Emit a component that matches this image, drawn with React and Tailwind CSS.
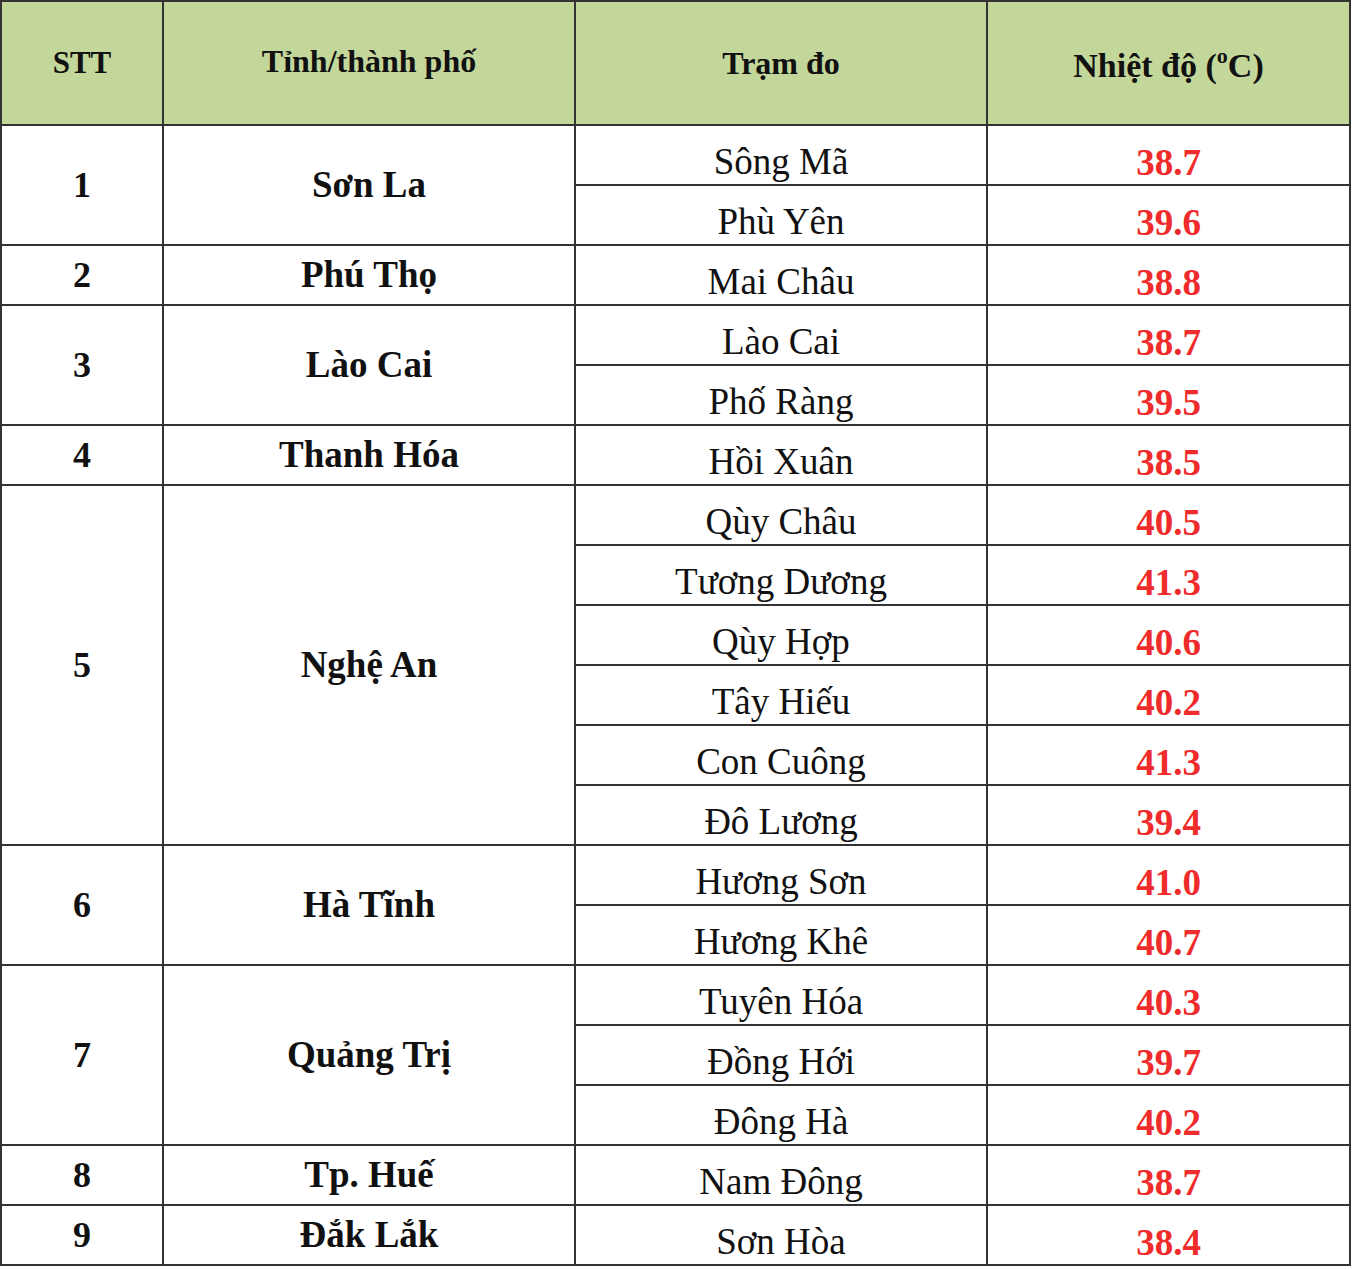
import React from "react";

const data = [
  { stt: 1, province: "Sơn La", stations: [["Sông Mã", "38.7"], ["Phù Yên", "39.6"]] },
  { stt: 2, province: "Phú Thọ", stations: [["Mai Châu", "38.8"]] },
  { stt: 3, province: "Lào Cai", stations: [["Lào Cai", "38.7"], ["Phố Ràng", "39.5"]] },
  { stt: 4, province: "Thanh Hóa", stations: [["Hồi Xuân", "38.5"]] },
  {
    stt: 5,
    province: "Nghệ An",
    stations: [
      ["Qùy Châu", "40.5"],
      ["Tương Dương", "41.3"],
      ["Qùy Hợp", "40.6"],
      ["Tây Hiếu", "40.2"],
      ["Con Cuông", "41.3"],
      ["Đô Lương", "39.4"],
    ],
  },
  { stt: 6, province: "Hà Tĩnh", stations: [["Hương Sơn", "41.0"], ["Hương Khê", "40.7"]] },
  {
    stt: 7,
    province: "Quảng Trị",
    stations: [["Tuyên Hóa", "40.3"], ["Đồng Hới", "39.7"], ["Đông Hà", "40.2"]],
  },
  { stt: 8, province: "Tp. Huế", stations: [["Nam Đông", "38.7"]] },
  { stt: 9, province: "Đắk Lắk", stations: [["Sơn Hòa", "38.4"]] },
];

const cell = "border-2 border-[#333] text-center";

const App = () => {
  return (
    <div className="bg-white min-h-screen font-['Liberation_Serif','Times_New_Roman',serif]">
      <table className="w-[1349px] table-fixed border-collapse text-[#111]">
        <colgroup>
          <col className="w-[162px]" />
          <col className="w-[412px]" />
          <col className="w-[412px]" />
          <col className="w-[363px]" />
        </colgroup>
        <thead>
          <tr className="h-[124px] bg-[#c4d79b]">
            <th className={`${cell} text-[31px] font-bold`}>STT</th>
            <th className={`${cell} text-[32px] font-bold pb-1`}>Tỉnh/thành phố</th>
            <th className={`${cell} text-[32px] font-bold`}>Trạm đo</th>
            <th className={`${cell} text-[34px] font-bold pt-1`}>
              Nhiệt độ (<sup className="text-[22px] -top-[14px]">o</sup>C)
            </th>
          </tr>
        </thead>
        <tbody>
          {data.map((g) =>
            g.stations.map(([name, temp], i) => (
              <tr key={`${g.stt}-${i}`} className="h-[60px]">
                {i === 0 && (
                  <>
                    <td rowSpan={g.stations.length} className={`${cell} align-middle text-[36px] font-bold`}>
                      {g.stt}
                    </td>
                    <td rowSpan={g.stations.length} className={`${cell} align-middle text-[37px] font-bold`}>
                      {g.province}
                    </td>
                  </>
                )}
                <td className={`${cell} align-bottom text-[37px] leading-[44px]`}>{name}</td>
                <td className={`${cell} align-bottom text-[37px] leading-[43px] font-bold text-[#ef2b2b]`}>{temp}</td>
              </tr>
            ))
          )}
        </tbody>
      </table>
    </div>
  );
};

export default App;
